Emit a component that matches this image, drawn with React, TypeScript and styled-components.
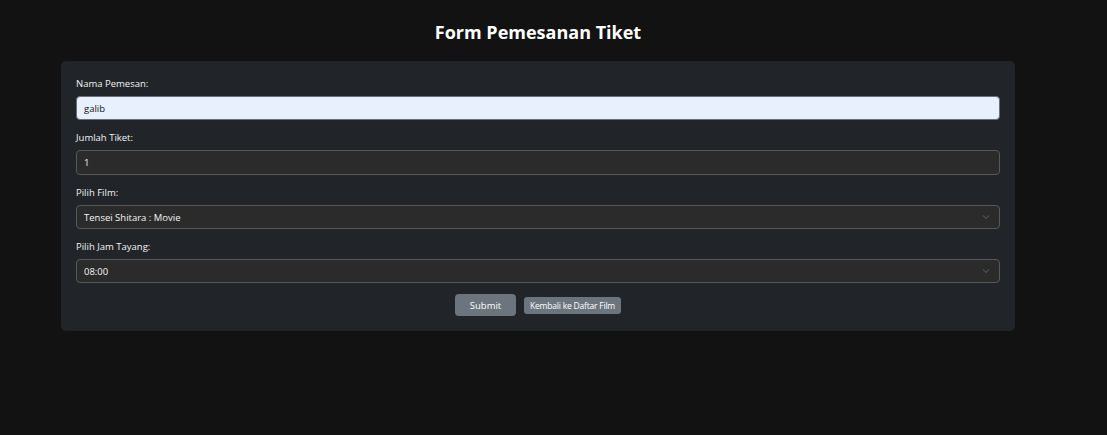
import React from "react";
import styled, { createGlobalStyle } from "styled-components";

const Global = createGlobalStyle`
  html, body {
    margin: 0;
    padding: 0;
    background: #121212;
    font-family: "Open Sans", "Noto Sans", sans-serif;
    color: #ffffff;
  }
  * { box-sizing: border-box; }
`;

const Page = styled.div`
  width: 1107px;
  min-height: 435px;
  padding: 21px 0 0 61px;
`;

const Title = styled.h2`
  width: 954px;
  margin: 0 0 18px;
  text-align: center;
  font-size: 18px;
  line-height: 22px;
  font-weight: 700;
  color: #ffffff;
`;

const Card = styled.form`
  width: 954px;
  background: #212529;
  border-radius: 5px;
  padding: 16px 15px 15px;
  display: flex;
  flex-direction: column;
`;

const Group = styled.div`
  display: flex;
  flex-direction: column;
  margin-bottom: 11px;
`;

const Label = styled.label`
  font-size: 9.5px;
  line-height: 14px;
  margin-bottom: 5px;
  color: #f2f2f2;
`;

const Input = styled.input<{ $light?: boolean }>`
  height: ${(p) => (p.$light ? "24px" : "25px")};
  width: 100%;
  border-radius: 4px;
  border: 1px solid ${(p) => (p.$light ? "#6b6f75" : "#585858")};
  background: ${(p) => (p.$light ? "#e8f0fe" : "#2b2b2b")};
  color: ${(p) => (p.$light ? "#111" : "#f5f5f5")};
  padding: 0 7px;
  font-family: inherit;
  font-size: 9.5px;
  outline: none;
`;

const SelectBox = styled.div`
  position: relative;
  height: 24px;
  border-radius: 4px;
  border: 1px solid #585858;
  background: #2b2b2b;
  display: flex;
  align-items: center;
  padding: 0 7px;
  font-size: 9.5px;
  color: #f5f5f5;
`;

const Chevron = styled.svg`
  position: absolute;
  right: 9px;
  top: 50%;
  transform: translateY(-50%);
`;

const Actions = styled.div`
  display: flex;
  justify-content: center;
  align-items: center;
  gap: 8px;
`;

const Button = styled.button<{ $small?: boolean }>`
  font-family: inherit;
  border: none;
  color: #ffffff;
  background: #6c757d;
  border-radius: ${(p) => (p.$small ? "3px" : "4px")};
  height: ${(p) => (p.$small ? "17px" : "22px")};
  width: ${(p) => (p.$small ? "97px" : "61px")};
  font-size: ${(p) => (p.$small ? "8.5px" : "9.5px")};
  padding: 0;
  white-space: nowrap;
  letter-spacing: ${(p) => (p.$small ? "-0.2px" : "0")};
`;

function Select({ value }: { value: string }) {
  return (
    <SelectBox>
      {value}
      <Chevron width="8" height="5" viewBox="0 0 8 5">
        <path d="M1 1 L4 4 L7 1" stroke="#4a4e54" strokeWidth="1.2" fill="none" />
      </Chevron>
    </SelectBox>
  );
}

export default function App() {
  return (
    <>
      <Global />
      <Page>
        <Title>Form Pemesanan Tiket</Title>
        <Card onSubmit={(e) => e.preventDefault()}>
          <Group>
            <Label>Nama Pemesan:</Label>
            <Input $light defaultValue="galib" />
          </Group>
          <Group>
            <Label>Jumlah Tiket:</Label>
            <Input defaultValue="1" />
          </Group>
          <Group>
            <Label>Pilih Film:</Label>
            <Select value="Tensei Shitara : Movie" />
          </Group>
          <Group>
            <Label>Pilih Jam Tayang:</Label>
            <Select value="08:00" />
          </Group>
          <Actions>
            <Button type="submit">Submit</Button>
            <Button $small type="button">Kembali ke Daftar Film</Button>
          </Actions>
        </Card>
      </Page>
    </>
  );
}
